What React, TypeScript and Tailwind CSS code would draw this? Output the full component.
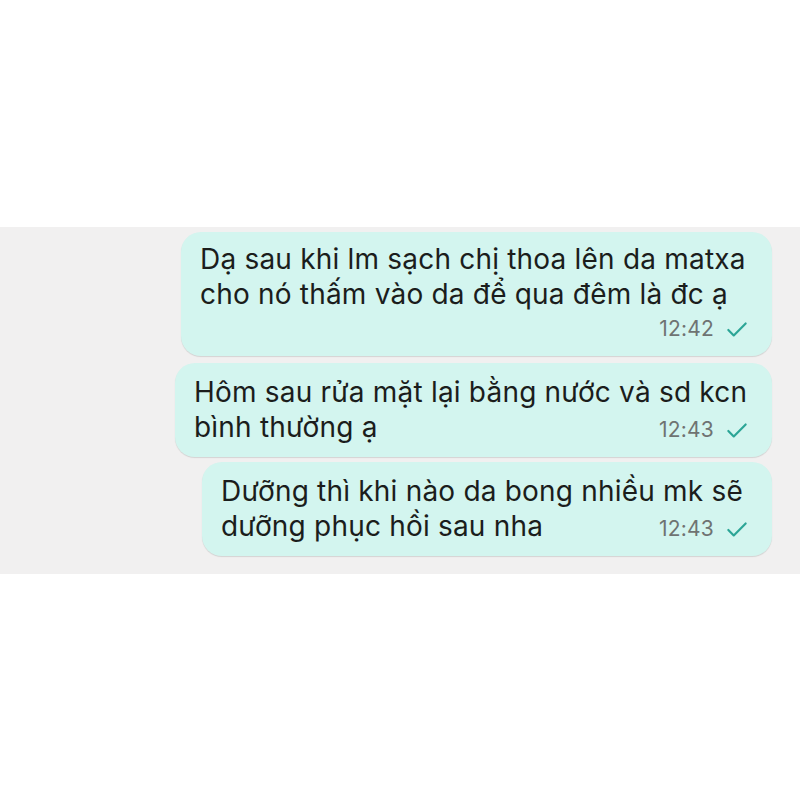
import { Check } from 'lucide-react';

type Msg = {
  lines: string[];
  time: string;
  width: string;
  gap: string;
  timeOwnRow?: boolean;
};

const MESSAGES: Msg[] = [
  {
    lines: ['Dạ sau khi lm sạch chị thoa lên da matxa', 'cho nó thấm vào da để qua đêm là đc ạ'],
    time: '12:42',
    width: 'w-[591px]',
    gap: 'mt-0 pt-[10px]',
    timeOwnRow: true,
  },
  {
    lines: ['Hôm sau rửa mặt lại bằng nước và sd kcn', 'bình thường ạ'],
    time: '12:43',
    width: 'w-[597px]',
    gap: 'mt-[7px] pt-[12px]',
  },
  {
    lines: ['Dưỡng thì khi nào da bong nhiều mk sẽ', 'dưỡng phục hồi sau nha'],
    time: '12:43',
    width: 'w-[570px]',
    gap: 'mt-[5px] pt-[12px]',
  },
];

function Stamp({ time }: { time: string }) {
  return (
    <span className="flex items-baseline gap-[10px] text-[21px] leading-none text-[#6f7372]">
      {time}
      <Check size={26} strokeWidth={2} className="-translate-y-[1px] self-center text-[#2ba596]" />
    </span>
  );
}

function Bubble({ msg }: { msg: Msg }) {
  const last = msg.lines[msg.lines.length - 1];
  const rest = msg.lines.slice(0, -1);
  return (
    <div
      className={`${msg.width} ${msg.gap} rounded-[20px] bg-[#d3f5ef] pl-[19px] pr-[22px] text-[28px] leading-[35px] tracking-[0.2px] text-[#1b1d1c] shadow-[0_1px_1px_rgba(0,0,0,0.12)]`}
    >
      {rest.map((l) => (
        <div key={l}>{l}</div>
      ))}
      {msg.timeOwnRow ? (
        <>
          <div>{last}</div>
          <div className="flex justify-end pb-[12px] pt-[6px]">
            <Stamp time={msg.time} />
          </div>
        </>
      ) : (
        <div className="flex items-baseline justify-between pb-[12px]">
          <span>{last}</span>
          <Stamp time={msg.time} />
        </div>
      )}
    </div>
  );
}

export default function App() {
  return (
    <div className="h-[800px] bg-white pt-[227px] font-['Inter','Noto_Sans',sans-serif]">
      <div className="flex flex-col items-end bg-[#f1f0f0] pb-[18px] pr-[28px] pt-[5px]">
        {MESSAGES.map((m, i) => (
          <Bubble key={i} msg={m} />
        ))}
      </div>
    </div>
  );
}
